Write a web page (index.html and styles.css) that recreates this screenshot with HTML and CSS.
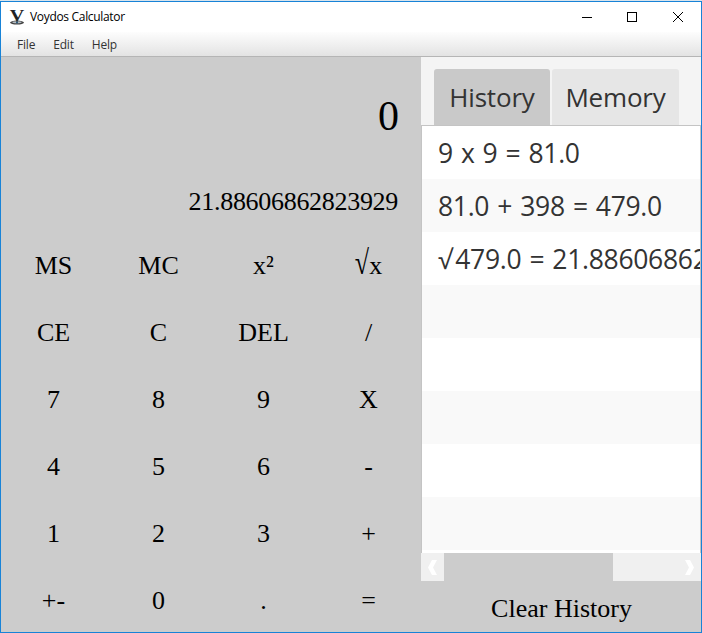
FILE: index.html
```html
<!DOCTYPE html>
<html lang="en">
<head>
<meta charset="utf-8">
<title>Voydos Calculator</title>
<link rel="stylesheet" href="styles.css">
</head>
<body>
<div class="window">
  <header class="titlebar">
    <svg class="logo" width="16" height="16" viewBox="0 0 16 16">
      <ellipse cx="8" cy="13.6" rx="7" ry="2" fill="#444"/>
      <ellipse cx="8" cy="13.3" rx="4.600" ry="1" fill="#b4bcc2"/>
      <text class="logo-letter" x="8" y="12" text-anchor="middle" textLength="14.500" lengthAdjust="spacingAndGlyphs">V</text>
      <path d="M8 10v3" stroke="#333" stroke-width="1.200"/>
      <circle cx="8" cy="13.400" r="1" fill="#257"/>
    </svg>
    <span class="title">Voydos Calculator</span>
    <svg class="controls" width="110" height="12" viewBox="0 0 110 12" fill="none" stroke="#000">
      <path d="M1 6.500h10"/>
      <rect x="46.500" y="1.500" width="9" height="9"/>
      <path d="M92 1l10 10M102 1L92 11"/>
    </svg>
  </header>
  <nav class="menubar"><span>File</span><span>Edit</span><span>Help</span></nav>
  <main class="content">
    <section class="calc">
      <div class="entry">0</div>
      <div class="result">21.88606862823929</div>
      <div class="keys">
        <button>MS</button><button>MC</button><button>x²</button><button><span class="root">√</span>x</button>
        <button>CE</button><button>C</button><button>DEL</button><button>/</button>
        <button>7</button><button>8</button><button>9</button><button>X</button>
        <button>4</button><button>5</button><button>6</button><button>-</button>
        <button>1</button><button>2</button><button>3</button><button>+</button>
        <button>+-</button><button>0</button><button>.</button><button>=</button>
      </div>
    </section>
    <aside class="side">
      <div class="tabs"><div class="tab active">History</div><div class="tab memory">Memory</div></div>
      <div class="list">
        <div class="row">9 x 9 = 81.0</div>
        <div class="row">81.0 + 398 = 479.0</div>
        <div class="row"><span class="radical">√</span>479.0 = 21.88606862823929</div>
        <div class="row"></div><div class="row"></div><div class="row"></div><div class="row"></div><div class="row"></div>
      </div>
      <div class="scrollbar">
        <svg width="23" height="28" viewBox="0 0 23 28"><path d="M11 7h5l-4 7.500 4 7.500h-5l-4-7.500z" fill="#fff"/></svg>
        <div class="thumb"></div>
        <svg class="next" width="23" height="28" viewBox="0 0 23 28"><path d="M7 7h5l4 7.500-4 7.500h-5l4-7.500z" fill="#fff"/></svg>
      </div>
      <button class="clear">Clear History</button>
    </aside>
  </main>
</div>
</body>
</html>
```
FILE: styles.css
```css
* { box-sizing: border-box; }
body { margin: 0; background: #d9e4ec; overflow: hidden; }
.window {
  width: 702px;
  height: 632px;
  margin-top: 1px;
  border: 1px solid #1883d7;
  background: #fff;
  display: flex;
  flex-direction: column;
}
.titlebar { height: 30px; display: flex; align-items: center; padding-left: 8px; flex: none; }
.logo { margin-right: 5px; overflow: visible; }
.logo-letter { font: bold 16px "Liberation Serif", serif; fill: #222; }
.title { font: 12px/16px "Open Sans", sans-serif; letter-spacing: -0.32px; color: #000; }
.controls { margin-left: auto; margin-right: 10px; }
.menubar {
  height: 25px;
  flex: none;
  display: flex;
  gap: 18px;
  padding-left: 16px;
  font: 12px/26px "Open Sans", sans-serif;
  letter-spacing: -0.2px;
  color: #333;
  background: linear-gradient(#fdfdfd, #e3e3e3);
  border-bottom: 1px solid #b5b5b5;
}
.content { flex: 1; display: flex; min-height: 0; }
.calc {
  width: 420px;
  background: #ccc;
  font-family: "Liberation Serif", serif;
  color: #000;
  display: flex;
  flex-direction: column;
  overflow: hidden;
}
.entry { flex: none; height: 118px; padding-right: 22px; text-align: right; font-size: 42px; line-height: 118px; }
.result { flex: none; height: 57px; padding-right: 23px; text-align: right; font-size: 26px; line-height: 54px; letter-spacing: -0.3px; }
.keys { flex: none; display: grid; grid-template-columns: repeat(4, 105px); grid-auto-rows: 67px; }
button { border: 0; padding: 0; background: #ccc; color: #000; font: 26px/67px "Liberation Serif", serif; }
.root { display: inline-block; line-height: 1; transform: scaleY(1.3); transform-origin: 50% 75%; }
.side { width: 280px; display: flex; flex-direction: column; background: #f4f4f4; }
.tabs { height: 69px; padding: 12px 0 0 13px; display: flex; gap: 2px; border-bottom: 1px solid #c4c4c4; flex: none; }
.tab {
  width: 116px;
  height: 56px;
  border-radius: 3px 3px 0 0;
  background: #e6e6e6;
  text-align: center;
  font: 26px/57px "Open Sans", sans-serif;
  letter-spacing: -0.2px;
  color: #333;
}
.tab.active { background: #c9c9c9; }
.tab.memory { width: 127px; }
.list { height: 427px; flex: none; background: #fff; border: solid #c4c4c4; border-width: 0 1px; overflow: hidden; }
.row {
  height: 53px;
  padding-left: 16px;
  font: 26.500px/54px "Open Sans", sans-serif;
  letter-spacing: -0.3px;
  word-spacing: 1.5px;
  color: #333;
  white-space: nowrap;
}
.row:nth-child(even) { background: #f9f9f9; }
.radical { margin-right: 3px; }
.scrollbar { height: 28px; display: flex; background: #f0f0f0; flex: none; }
.thumb { width: 169px; background: #ccc; }
.next { margin-left: auto; }
.clear { flex: none; height: 51px; line-height: 51px; padding: 2px 0 0 1px; }
```
